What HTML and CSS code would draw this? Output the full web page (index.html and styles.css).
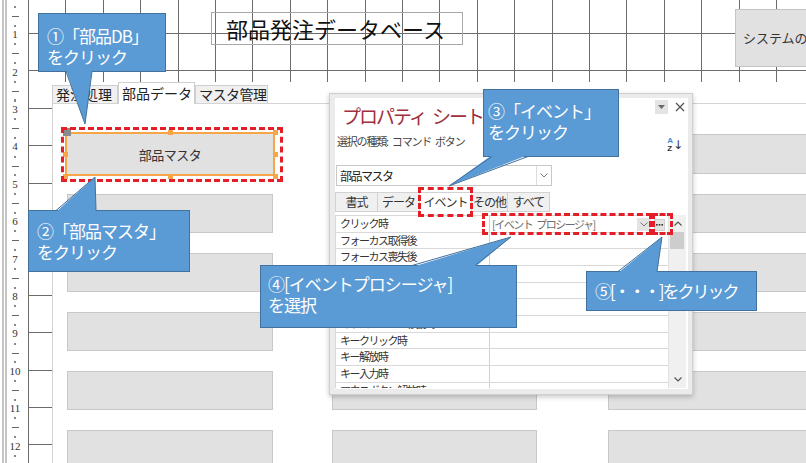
FILE: index.html
```html
<!DOCTYPE html>
<html lang="ja">
<head>
    <meta charset="UTF-8">
    <meta name="viewport" content="width=device-width, initial-scale=1.0">
    <title>部品発注データベース - デザイン ビュー</title>
    <link rel="stylesheet" href="styles.css">
</head>
<body>
    <div class="screen">
        <div class="ruler">
            <div class="ruler-nums">
                <span>1</span><span>2</span><span>3</span><span>4</span><span>5</span><span>6</span>
                <span>7</span><span>8</span><span>9</span><span>10</span><span>11</span><span>12</span>
            </div>
        </div>

        <div class="surface">
            <div class="form-header">
                <div class="title-label">部品発注データベース</div>
                <div class="sys-btn">システムの設定</div>
            </div>

            <div class="tabctl">
                <div class="tabstrip">
                    <div class="tab tab-order">発注処理</div>
                    <div class="tab tab-parts active">部品データ</div>
                    <div class="tab tab-master">マスタ管理</div>
                </div>
                <div class="tabbody">
                    <div class="btn-grid">
                        <div class="cmd selected">
                            部品マスタ
                            <span class="handle h-tl"></span>
                            <span class="handle h-tm"></span>
                            <span class="handle h-tr"></span>
                            <span class="handle h-ml"></span>
                            <span class="handle h-mr"></span>
                            <span class="handle h-bl"></span>
                            <span class="handle h-bm"></span>
                            <span class="handle h-br"></span>
                        </div>
                        <div class="cmd"></div><div class="cmd"></div>
                        <div class="cmd"></div><div class="cmd"></div><div class="cmd"></div>
                        <div class="cmd"></div><div class="cmd"></div><div class="cmd"></div>
                        <div class="cmd"></div><div class="cmd"></div><div class="cmd"></div>
                        <div class="cmd"></div><div class="cmd"></div><div class="cmd"></div>
                        <div class="cmd"></div><div class="cmd"></div><div class="cmd"></div>
                    </div>
                </div>
            </div>
        </div>

        <!-- floating property sheet -->
        <div class="propsheet">
            <div class="ps-inner">
                <div class="ps-head">
                    <div class="ps-title">プロパティ<span class="gap"></span>シート</div>
                    <div class="ps-winbtns">
                        <span class="ps-menu"><svg width="7" height="4"><polygon points="0,0 7,0 3.5,4" fill="#6a6a6a"/></svg></span>
                        <svg class="ps-close" width="10" height="10"><path d="M1 1L9 9M9 1L1 9" stroke="#555" stroke-width="1.3"/></svg>
                    </div>
                </div>
                <div class="ps-type-row">
                    <span class="ps-type">選択の種類:<span class="gap"></span>コマンド<span class="gap"></span>ボタン</span>
                    <span class="ps-sort">
                        <span class="az"><b class="az-a">A</b><b class="az-z">Z</b></span>
                        <span class="az-arrow">↓</span>
                    </span>
                </div>
                <div class="ps-combo">
                    <span class="ps-combo-text">部品マスタ</span>
                    <span class="ps-combo-btn"><svg width="8" height="5"><polyline points="0.5,0.5 4,4 7.5,0.5" fill="none" stroke="#777" stroke-width="1"/></svg></span>
                </div>
                <div class="ps-tabs">
                    <div class="ps-tab t-format">書式</div>
                    <div class="ps-tab t-data">データ</div>
                    <div class="ps-tab t-event active">イベント</div>
                    <div class="ps-tab t-other">その他</div>
                    <div class="ps-tab t-all">すべて</div>
                </div>
                <div class="ps-grid-wrap">
                    <div class="ps-grid">
                        <div class="ps-row">
                            <div class="ps-label">クリック時</div>
                            <div class="ps-value">
                                <span class="ps-value-text">[イベント<span class="gap"></span>プロシージャ]</span>
                                <span class="ps-drop"><svg width="8" height="5"><polyline points="0.5,0.5 4,4 7.5,0.5" fill="none" stroke="#777" stroke-width="1"/></svg></span>
                                <span class="ps-build"><svg width="7" height="2"><rect x="0" y="0" width="1.6" height="1.6" fill="#333"/><rect x="2.7" y="0" width="1.6" height="1.6" fill="#333"/><rect x="5.4" y="0" width="1.6" height="1.6" fill="#333"/></svg></span>
                            </div>
                        </div>
                        <div class="ps-row"><div class="ps-label">フォーカス取得後</div><div class="ps-value"></div></div>
                        <div class="ps-row"><div class="ps-label">フォーカス喪失後</div><div class="ps-value"></div></div>
                        <div class="ps-row"><div class="ps-label">ダブルクリック時</div><div class="ps-value"></div></div>
                        <div class="ps-row"><div class="ps-label">マウスボタン押下時</div><div class="ps-value"></div></div>
                        <div class="ps-row"><div class="ps-label">マウス移動時</div><div class="ps-value"></div></div>
                        <div class="ps-row"><div class="ps-label">マウスホイール移動時</div><div class="ps-value"></div></div>
                        <div class="ps-row"><div class="ps-label">キークリック時</div><div class="ps-value"></div></div>
                        <div class="ps-row"><div class="ps-label">キー解放時</div><div class="ps-value"></div></div>
                        <div class="ps-row"><div class="ps-label">キー入力時</div><div class="ps-value"></div></div>
                        <div class="ps-row"><div class="ps-label">マウスボタン解放時</div><div class="ps-value"></div></div>
                    </div>
                    <div class="ps-scroll">
                        <span class="sb-arrow"><svg width="8" height="5"><polyline points="0.5,4.5 4,1 7.5,4.5" fill="none" stroke="#555" stroke-width="1.2"/></svg></span>
                        <span class="sb-thumb"></span>
                        <span class="sb-track"></span>
                        <span class="sb-arrow"><svg width="8" height="5"><polyline points="0.5,0.5 4,4 7.5,0.5" fill="none" stroke="#555" stroke-width="1.2"/></svg></span>
                    </div>
                </div>
            </div>
        </div>

        <!-- red dashed highlights -->
        <div class="mark mark-button"></div>
        <div class="mark mark-tab"></div>
        <div class="mark mark-value"></div>
        <div class="mark mark-builder"></div>

        <!-- callouts -->
        <div class="callout c1">①「部品DB」<br>をクリック</div>
        <div class="callout c2">②「部品マスタ」<br>をクリック</div>
        <div class="callout c3">③「イベント」<br>をクリック</div>
        <div class="callout c4">④[イベントプロシージャ]<br>を選択</div>
        <div class="callout c5">⑤[・・・]をクリック</div>

        <svg class="tails" width="806" height="463">
            <polygon points="66,70 92,70 85,124" fill="#5b9bd5"/>
            <polyline points="66,71.5 85,124 92,71.5" fill="none" stroke="#41719c"/>

            <polygon points="56,212 96,212 95,177" fill="#5b9bd5"/>
            <polyline points="56,210.5 95,177 96,210.5" fill="none" stroke="#41719c"/>

            <polygon points="492,155 528,155 449,186" fill="#5b9bd5"/>
            <polyline points="492,156.5 449,186 528,156.5" fill="none" stroke="#41719c"/>

            <polygon points="412,267 475,267 511,237" fill="#5b9bd5"/>
            <polyline points="412,265.5 511,237 475,265.5" fill="none" stroke="#41719c"/>

            <polygon points="618,273 657,273 662,237" fill="#5b9bd5"/>
            <polyline points="618,271.5 662,237 657,271.5" fill="none" stroke="#41719c"/>
        </svg>
    </div>
</body>
</html>
```

FILE: styles.css
```css
* {
    box-sizing: border-box;
}

body {
    margin: 0;
    font-family: "Noto Sans CJK JP", "Liberation Sans", sans-serif;
    color: #222;
    background: #fff;
}

.screen {
    position: relative;
    width: 806px;
    height: 463px;
    overflow: hidden;
    display: flex;
    background: #fff;
}

.gap {
    display: inline-block;
    width: 5px;
}

/* ---------- vertical ruler ---------- */
.ruler {
    flex: none;
    width: 26px;
    height: 100%;
    margin-left: 2px;
    border-left: 5px double #c4c4c4;
    background-image:
        repeating-linear-gradient(to bottom, #666 16px, #666 17px, transparent 17px, transparent 53.4px),
        repeating-linear-gradient(to bottom, #888 6px, #888 8px, transparent 8px, transparent 24.7px);
    background-repeat: no-repeat;
    background-size: 7px 100%, 2px 100%;
    background-position: 5px 0, 7px 0;
}

.ruler-nums {
    width: 16px;
    padding-top: 16.3px;
    font: 11px "Liberation Serif", serif;
    color: #333;
    text-align: center;
}

.ruler-nums span {
    display: block;
    height: 37.4px;
    line-height: 37.4px;
}

/* ---------- design surface ---------- */
.surface {
    position: relative;
    flex: 1;
    height: 100%;
    overflow: hidden;
    background-image:
        repeating-linear-gradient(to right, #6b6b6b 0, #6b6b6b 1px, transparent 1px, transparent 37.4px),
        repeating-linear-gradient(to bottom, #6b6b6b -4.4px, #6b6b6b -3.4px, transparent -3.4px, transparent 33px);
}

.form-header {
    height: 82px;
    display: flex;
    align-items: flex-start;
}

.title-label {
    flex: none;
    width: 252px;
    height: 33px;
    margin: 12px 0 0 183px;
    padding-left: 14px;
    border: 1px solid #a8a8a8;
    font-size: 22px;
    line-height: 31px;
    color: #111;
    white-space: nowrap;
}

.sys-btn {
    flex: none;
    width: 90px;
    height: 58px;
    margin: 9px 0 0 272px;
    padding-left: 7px;
    background: #e1e1e1;
    border: 1px solid #c4c4c4;
    font-size: 13px;
    line-height: 56px;
    color: #333;
    white-space: nowrap;
}

/* ---------- tab control ---------- */
.tabctl {
    margin-left: 24px;
    height: 381px;
    background: #fff;
    display: flex;
    flex-direction: column;
}

.tabstrip {
    height: 21px;
    display: flex;
    align-items: flex-end;
}

.tab {
    height: 18px;
    padding-left: 3px;
    border: 1px solid #cfcfcf;
    border-bottom: none;
    background: #f0f0f0;
    font-size: 14px;
    line-height: 17px;
    color: #222;
    white-space: nowrap;
    overflow: hidden;
}

.tab-order { width: 66px; }
.tab-parts { width: 77px; }
.tab-master { width: 73px; letter-spacing: -0.5px; }

.tab.active {
    position: relative;
    z-index: 1;
    height: 22px;
    margin-bottom: -1px;
    background: #fff;
    line-height: 20px;
}

.tabbody {
    flex: 1;
    border-top: 1px solid #d4d4d4;
    border-left: 1px solid #d4d4d4;
    padding: 30px 0 0 14px;
}

.btn-grid {
    display: grid;
    grid-template-columns: 265px 276px 220px;
    grid-template-rows: 40px repeat(5, 39px);
    row-gap: 20px;
}

.cmd {
    width: 206px;
    background: #e1e1e1;
    border: 1px solid #c8c8c8;
}

.cmd:nth-child(3n+2) { width: 205px; }
.cmd:nth-child(3n) { width: 220px; }

.cmd.selected {
    position: relative;
    border: none;
    outline: 2px solid #f7a546;
    display: flex;
    align-items: center;
    justify-content: center;
    font-size: 13px;
    letter-spacing: -0.5px;
    color: #333;
}

.handle {
    position: absolute;
    width: 5px;
    height: 5px;
    background: #f7a546;
}

.h-tl { left: -4px; top: -6px; width: 8px; height: 8px; background: #8a8a8a; }
.h-tm { left: 101px; top: -4px; }
.h-tr { left: 206px; top: -4px; }
.h-ml { left: -4px; top: 18px; }
.h-mr { left: 206px; top: 18px; }
.h-bl { left: -4px; top: 40px; }
.h-bm { left: 101px; top: 40px; }
.h-br { left: 206px; top: 40px; }

/* ---------- property sheet ---------- */
.propsheet {
    position: absolute;
    left: 329px;
    top: 93px;
    width: 364px;
    height: 302px;
    padding: 4px 4px 5px 5px;
    background: #ebebeb;
    border: 1px solid #cfcfcf;
    box-shadow: 0 2px 5px rgba(0,0,0,0.22);
}

.ps-inner {
    height: 100%;
    background: #fff;
    overflow: hidden;
    display: flex;
    flex-direction: column;
}

.ps-head {
    height: 36px;
    display: flex;
    justify-content: space-between;
    align-items: flex-start;
}

.ps-title {
    padding: 6px 0 0 7px;
    font-size: 19px;
    line-height: 24px;
    letter-spacing: -2px;
    color: #a0303e;
    white-space: nowrap;
}

.ps-title .gap {
    width: 6px;
}

.ps-winbtns {
    display: flex;
    align-items: center;
    gap: 7px;
    margin: 2px 2px 0 0;
}

.ps-menu {
    width: 13px;
    height: 14px;
    background: #e4e4e4;
    display: flex;
    align-items: center;
    justify-content: center;
}

.ps-close {
    display: block;
    margin-right: 1px;
}

.ps-type-row {
    height: 26px;
    display: flex;
    justify-content: space-between;
    align-items: flex-start;
}

.ps-type {
    padding-left: 2px;
    font-size: 11px;
    line-height: 14px;
    letter-spacing: -1.2px;
    color: #444;
    white-space: nowrap;
}

.ps-type .gap {
    width: 4px;
}

.ps-sort {
    display: flex;
    align-items: center;
    margin: 3px 5px 0 0;
}

.az {
    display: flex;
    flex-direction: column;
    font-family: "Liberation Sans", sans-serif;
    font-size: 8px;
    line-height: 8px;
}

.az-a { color: #3b8fd6; }
.az-z { color: #333; }

.az-arrow {
    font-family: "DejaVu Sans", sans-serif;
    font-size: 12px;
    color: #333;
}

.ps-combo {
    width: 216px;
    height: 21px;
    margin: 5px 0 0 1px;
    border: 1px solid #c8c8c8;
    display: flex;
}

.ps-combo-text {
    padding-left: 3px;
    font-size: 12px;
    line-height: 19px;
    letter-spacing: -1.5px;
    color: #222;
}

.ps-combo-btn {
    margin-left: auto;
    width: 15px;
    border-left: 1px solid #ddd;
    display: flex;
    align-items: center;
    justify-content: center;
}

.ps-tabs {
    height: 20px;
    margin-top: 6px;
    display: flex;
}

.ps-tab {
    height: 20px;
    border: 1px solid #d2d2d2;
    border-left: none;
    background: #f0f0f0;
    font-size: 12px;
    line-height: 18px;
    letter-spacing: -1px;
    color: #333;
    text-align: center;
    white-space: nowrap;
}

.t-format { width: 43px; border-left: 1px solid #d2d2d2; }
.t-data { width: 42px; }
.t-event { width: 52px; }
.t-other { width: 36px; }
.t-all { width: 42px; }

.ps-tab.active {
    background: #fff;
    border-bottom: none;
}

.ps-grid-wrap {
    height: 173px;
    margin-top: 3px;
    display: flex;
}

.ps-grid {
    width: 333px;
    border-top: 1px solid #d9d9d9;
    border-left: 1px solid #d9d9d9;
    overflow: hidden;
}

.ps-row {
    height: 16.67px;
    display: grid;
    grid-template-columns: 154px 1fr;
    border-bottom: 1px solid #d9d9d9;
}

.ps-label {
    padding-left: 4px;
    border-right: 1px solid #d0d0d0;
    font-size: 11px;
    line-height: 15px;
    letter-spacing: -1.5px;
    color: #333;
    white-space: nowrap;
    overflow: hidden;
}

.ps-value {
    display: flex;
    align-items: center;
    gap: 3px;
    padding: 0 3px 0 2px;
}

.ps-value-text {
    font-size: 11px;
    letter-spacing: -1.5px;
    color: #6d6d6d;
    white-space: nowrap;
}

.ps-value-text .gap {
    width: 4px;
}

.ps-drop {
    margin-left: auto;
    width: 14px;
    height: 13px;
    background: #e3e3e3;
    display: flex;
    align-items: center;
    justify-content: center;
}

.ps-build {
    width: 11px;
    height: 12px;
    margin-top: 2px;
    background: #e3e3e3;
    border: 1px solid #cfcfcf;
    display: flex;
    align-items: center;
    justify-content: center;
}

.ps-scroll {
    width: 18px;
    background: #f0f0f0;
    border-left: 1px solid #e2e2e2;
    display: flex;
    flex-direction: column;
}

.sb-arrow {
    height: 17px;
    display: flex;
    align-items: center;
    justify-content: center;
}

.sb-thumb {
    height: 17px;
    margin: 0 2px 0 1px;
    background: #cdcdcd;
}

.sb-track {
    flex: 1;
}

/* ---------- annotations ---------- */
.mark {
    position: absolute;
    border: 3px dashed #e41e26;
}

.mark-button { left: 61px; top: 127px; width: 222px; height: 55px; }
.mark-tab { left: 418px; top: 187px; width: 55px; height: 30px; }
.mark-value { left: 482px; top: 213px; width: 170px; height: 22px; }
.mark-builder { left: 652px; top: 213px; width: 21px; height: 22px; }

.callout {
    position: absolute;
    background: #5b9bd5;
    border: 1px solid #41719c;
    color: #fff;
    font-size: 17px;
    line-height: 21px;
    letter-spacing: -1px;
    white-space: nowrap;
}

.c1 { left: 38px; top: 13px; width: 128px; height: 59px; padding: 11px 0 0 8px; }
.c2 { left: 28px; top: 210px; width: 162px; height: 62px; padding: 9px 0 0 8px; }
.c3 { left: 483px; top: 89px; width: 136px; height: 68px; padding: 10px 0 0 4px; }
.c4 { left: 260px; top: 265px; width: 257px; height: 63px; padding: 7px 0 0 7px; }
.c5 { left: 586px; top: 271px; width: 171px; height: 40px; padding: 8px 0 0 8px; letter-spacing: -2px; }

.tails {
    position: absolute;
    left: 0;
    top: 0;
    pointer-events: none;
}
```
